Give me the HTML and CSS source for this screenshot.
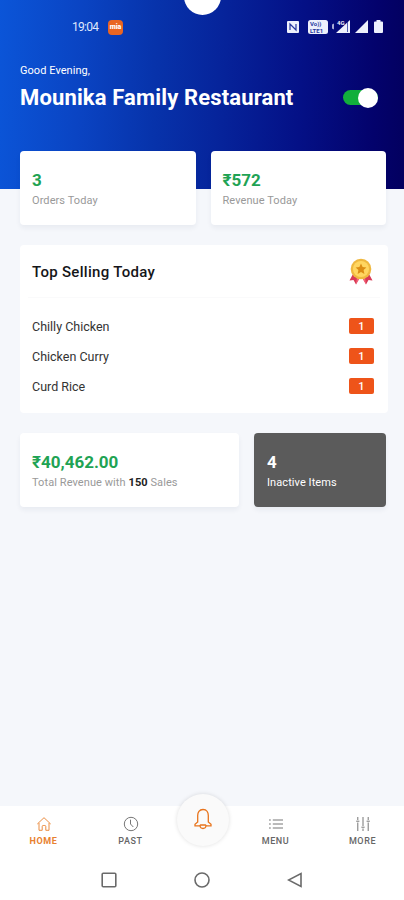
FILE: index.html
```html
<!DOCTYPE html>
<html lang="en">
<head>
<meta charset="utf-8">
<title>Mounika Family Restaurant</title>
<link rel="stylesheet" href="styles.css">
</head>
<body>
<div class="phone">
  <header class="hero">
    <div class="camera"></div>
    <div class="status">
      <span class="clock">19:04</span>
      <span class="app-badge">mia</span>
      <svg class="status-icons" width="98" height="16" viewBox="0 0 98 16">
        <g fill="#edf0fc">
          <rect x="1" y="2" width="12" height="12" rx="1"/>
          <rect x="22" y="1" width="20" height="14" rx="2.5"/>
          <path d="M64 1v13H50z"/>
          <path d="M82 1v13H69z"/>
          <path d="M88 3.500q0-1 1-1h1.500V1h4v1.500H96q1 0 1 1V13q0 1-1 1h-7q-1 0-1-1z"/>
          <path d="M48 4.500v6l-2-1v-4z" opacity=".7"/>
        </g>
        <path d="M4 11V5l6 6V5" fill="none" stroke="#26389f" stroke-width="1.200"/>
        <text class="tiny" x="24" y="7">Vo))</text>
        <text class="tiny" x="24" y="14">LTE1</text>
        <text class="tiny light" x="51" y="6">4G</text>
        <path d="M61.500 3v10" stroke="#26389f" stroke-width=".8"/>
      </svg>
    </div>
    <p class="greeting">Good Evening,</p>
    <div class="title-row">
      <h1>Mounika Family Restaurant</h1>
      <span class="switch"><span class="knob"></span></span>
    </div>
  </header>

  <main>
    <section class="row today">
      <div class="card"><b class="figure">3</b><span class="label">Orders Today</span></div>
      <div class="card"><b class="figure">₹572</b><span class="label">Revenue Today</span></div>
    </section>
    <section class="top">
      <div class="top-head">
        <h2>Top Selling Today</h2>
        <svg width="24" height="28" viewBox="0 0 24 28">
          <path d="M4 16L.5 22.500l4-.5 2.500 4.500L11 19zM20 16l3.500 6.500-4-.5-2.500 4.500L13 19z" fill="#d93b56"/>
          <path d="M8 19l-1 7.500 3.500-6zM16 19l1 7.500-3.500-6z" fill="#f3657c"/>
          <circle cx="12" cy="11" r="10.300" fill="#efb83f"/>
          <circle cx="12" cy="11" r="8" fill="#ffd660"/>
          <path d="M12 5.600l1.600 3.500 3.800.4-2.800 2.600.8 3.800-3.400-1.900-3.400 1.900.8-3.800-2.800-2.600 3.800-.4z" fill="#dc8d13"/>
        </svg>
      </div>
      <ul>
        <li><span>Chilly Chicken</span><b>1</b></li>
        <li><span>Chicken Curry</span><b>1</b></li>
        <li><span>Curd Rice</span><b>1</b></li>
      </ul>
    </section>
    <section class="row totals">
      <div class="card"><b class="figure">₹40,462.00</b><span class="label">Total Revenue with <strong>150</strong> Sales</span></div>
      <div class="card dark"><b class="figure">4</b><span class="label">Inactive Items</span></div>
    </section>
  </main>

  <nav class="tabs">
    <a class="tab active">
      <svg width="16" height="16" viewBox="0 0 16 16"><path d="M1.300 8L8 1.700 14.700 8M3 7v7.300h3.200V10.500q0-1 1-1h1.600q1 0 1 1v3.800H13V7"/></svg>
      <span>HOME</span>
    </a>
    <a class="tab">
      <svg width="16" height="16" viewBox="0 0 16 16"><circle cx="8" cy="8" r="6.700"/><path d="M7.500 3.700V8l2.800 3"/></svg>
      <span>PAST</span>
    </a>
    <a class="bell">
      <svg width="20" height="24" viewBox="0 0 20 24"><path d="M10 1.500c-3.800 0-5.300 2.800-5.300 6v6.500L2 16.200v1.600h4.800l.8-.8h4.800l.8.800H18v-1.600L15.300 14V7.500c0-3.200-1.500-6-5.300-6zM7 18c.5 3.300 5.500 3.300 6 0"/></svg>
    </a>
    <a class="tab">
      <svg width="16" height="16" viewBox="0 0 16 16"><path d="M1 4h1.800M1 8h1.800M1 12h1.800M4.800 4H15M4.800 8H15M4.800 12H15"/></svg>
      <span>MENU</span>
    </a>
    <a class="tab">
      <svg width="16" height="16" viewBox="0 0 16 16"><path d="M2.800 1v3M2.800 6.500V15M8 1v9M8 12.500V15M13.200 1v3M13.200 6.500V15M1.200 5.200h3.200M6.400 11.200h3.200M11.600 5.200h3.200"/></svg>
      <span>MORE</span>
    </a>
  </nav>
  <footer class="system">
    <svg width="16" height="16" viewBox="0 0 16 16"><rect x="1.200" y="1.200" width="13.600" height="13.600" rx="1"/></svg>
    <svg width="16" height="16" viewBox="0 0 16 16"><circle cx="8" cy="8" r="7"/></svg>
    <svg width="16" height="16" viewBox="0 0 16 16"><path d="M14 1.500v13L1.500 8z"/></svg>
  </footer>
</div>
</body>
</html>
```
FILE: styles.css
```css
* { box-sizing: border-box; }
body {
  margin: 0;
  font-family: Roboto, "Noto Sans", sans-serif;
  color: #222;
}
h1, h2, p, ul { margin: 0; padding: 0; }
.phone {
  width: 404px;
  height: 900px;
  display: flex;
  flex-direction: column;
  background: #f5f7fb;
  overflow: hidden;
}
.hero {
  position: relative;
  height: 189px;
  flex: none;
  padding: 19px 20px 0;
  color: #fff;
  background: linear-gradient(92deg, #0b55d8 0%, #0a44c3 20%, #0733ab 38%, #06239a 55%, #041086 74%, #03026c 92%, #03005f 100%);
}
.camera {
  position: absolute;
  left: 184px;
  top: -22px;
  width: 37px;
  height: 37px;
  border-radius: 50%;
  background: #fff;
}
.status {
  display: flex;
  align-items: center;
  height: 16px;
  padding-left: 52px;
}
.clock { font-size: 12px; width: 27px; letter-spacing: -.7px; color: #dfe7fc; }
.app-badge {
  width: 15px;
  height: 15px;
  margin-left: 9px;
  border-radius: 4px;
  background: #e96522;
  font-size: 7px;
  font-weight: 900;
  line-height: 14px;
  text-align: center;
}
.status-icons { flex: none; margin-left: 163px; }
.tiny { font: 700 6px Roboto, sans-serif; fill: #26389f; }
.tiny.light { fill: #edf0fc; }
.greeting { margin-top: 28px; font-size: 11px; line-height: 16px; letter-spacing: .05px; }
.title-row {
  display: flex;
  justify-content: space-between;
  align-items: center;
  height: 37px;
  padding-right: 6px;
}
h1 { padding-top: 1px; font-size: 22px; font-weight: 700; line-height: 30px; letter-spacing: .14px; white-space: nowrap; }
.switch {
  display: flex;
  align-items: center;
  justify-content: flex-end;
  width: 35px;
  height: 15px;
  border-radius: 8px;
  background: #12af3c;
}
.knob { width: 20px; height: 20px; border-radius: 50%; background: #fff; }
main { position: relative; padding: 0 16px 0 20px; margin-top: -38px; height: 655px; flex: none; }
.row { display: flex; gap: 15px; padding-right: 2px; }
.card {
  flex: 1;
  height: 74px;
  padding: 17px 12px 0;
  border-radius: 4px;
  background: #fff;
  box-shadow: 0 3px 5px rgba(40, 50, 80, .06);
}
.figure { display: block; font-size: 17px; line-height: 24px; color: #1fa354; font-weight: 700; }
.label { display: block; font-size: 11px; line-height: 17px; letter-spacing: .08px; color: #999; white-space: nowrap; }
.label strong { color: #222; }
.top {
  height: 168px;
  margin: 20px 0;
  border-radius: 4px;
  background: #fff;
}
.top-head {
  display: flex;
  align-items: center;
  justify-content: space-between;
  height: 53px;
  margin: 0 8px;
  padding: 1px 7px 0 4px;
  border-bottom: 1px solid #fafafb;
}
h2 { font-size: 15px; font-weight: 500; letter-spacing: .3px; color: #151519; }
ul { padding: 13px 14px 0 12px; list-style: none; }
li {
  display: flex;
  align-items: center;
  justify-content: space-between;
  height: 30px;
  font-size: 12.5px;
  color: #333;
}
li b {
  width: 25px;
  height: 16px;
  border-radius: 2px;
  background: #ee5419;
  color: #fff;
  font-size: 11px;
  line-height: 17px;
  font-weight: 500;
  text-align: center;
}
.totals .card:first-child { flex: 0 0 219px; }
.card.dark { padding-left: 13px; background: #5b5b5b; }
.dark .figure, .dark .label { color: #fff; }
.tabs {
  display: flex;
  height: 53px;
  flex: none;
  background: #fff;
}
.tab {
  flex: none;
  width: 87px;
  display: flex;
  flex-direction: column;
  align-items: center;
  padding-top: 10px;
  font-size: 9px;
  line-height: 10px;
  font-weight: 500;
  letter-spacing: .6px;
  color: #666;
}
.tab span { margin-top: 4px; }
.tab svg, .bell svg, .system svg { fill: none; stroke: currentColor; stroke-width: 1; }
.tab svg { stroke-width: .9; }
.active { color: #e8812f; font-weight: 700; }
.bell {
  flex: none;
  position: relative;
  z-index: 1;
  width: 52px;
  height: 52px;
  margin: -12px 3px 0;
  border-radius: 50%;
  background: #fafafa;
  box-shadow: 0 0 4px rgba(0, 0, 0, .13);
  color: #e8741c;
  display: flex;
  align-items: center;
  justify-content: center;
}
.bell svg { stroke-width: 1.3; }
.system {
  flex: 1;
  background: #fff;
  color: #6a6a6a;
  display: flex;
  justify-content: center;
  gap: 77px;
  padding: 13px 0 0;
}
.system svg { stroke-width: 1.6; }
```
